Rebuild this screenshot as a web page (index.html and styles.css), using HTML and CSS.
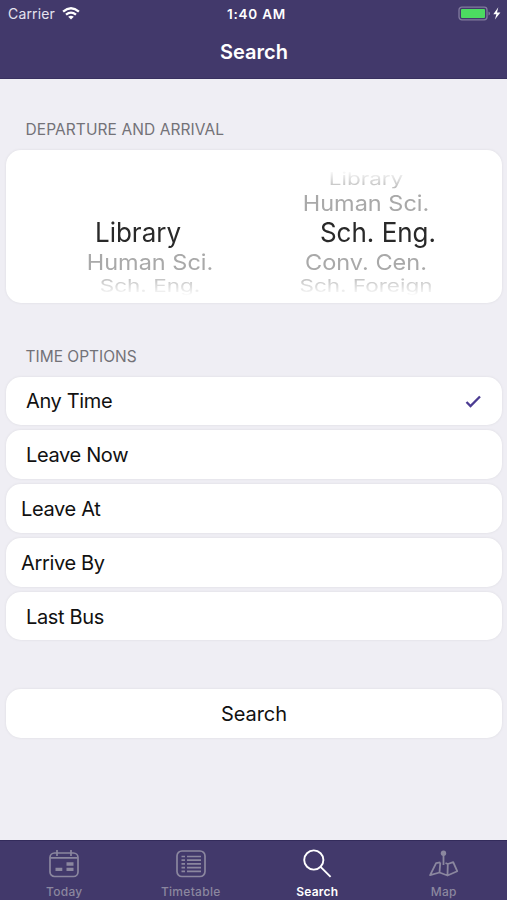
FILE: index.html
```
<!DOCTYPE html>
<html lang="en">
<head>
<meta charset="utf-8">
<title>Search</title>
<link rel="stylesheet" href="styles.css">
</head>
<body>
<header class="header">
  <div class="status">
    <div class="carrier"><span>Carrier</span>
      <svg class="wifi" viewBox="0 0 18 13" width="18" height="13" fill="none" stroke="#fff" stroke-width="2.3"><path d="M1.1 4.7Q9-2.1 16.9 4.7M4 7.7Q9 3.5 14 7.7"/><path d="M9 12.6 6.2 9.8Q9 7.5 11.8 9.8Z" fill="#fff" stroke="none"/></svg>
    </div>
    <span class="clock">1:40 AM</span>
    <svg class="battery" viewBox="0 0 44 16" width="44" height="16"><rect x="1" y="1.1" width="28" height="12.8" rx="2.8" fill="none" stroke="#817b9e" stroke-width="1.3"/><rect x="3" y="3.1" width="24" height="8.8" rx="1" fill="#4cdb61"/><path d="M30.5 5.5v4q1.5-.5 1.5-2t-1.5-2" fill="#817b9e"/><path d="M40.3 1.2 35.3 8.2h3.1L36.9 13.6l5.5-7.2h-3.4Z" fill="#fff"/></svg>
  </div>
  <h1 class="title">Search</h1>
</header>
<main class="content">
  <h2 class="label">DEPARTURE AND ARRIVAL</h2>
  <section class="card picker">
    <div class="wheel wheel-from">
      <div class="far"></div>
      <div class="near"></div>
      <div class="current"><span>Library</span></div>
      <div class="near"><span>Human Sci.</span></div>
      <div class="far below"><span>Sch. Eng.</span></div>
    </div>
    <div class="wheel wheel-to">
      <div class="far above"><span>Library</span></div>
      <div class="near"><span>Human Sci.</span></div>
      <div class="current"><span>Sch. Eng.</span></div>
      <div class="near"><span>Conv. Cen.</span></div>
      <div class="far below"><span>Sch. Foreign</span></div>
    </div>
  </section>
  <h2 class="label label-time">TIME OPTIONS</h2>
  <div class="options">
    <div class="card option"><span>Any Time</span><svg viewBox="0 0 18 14" width="18" height="14" fill="none" stroke="#4b3b92" stroke-width="2.3"><path d="m2.5 8 4 4L16 2.5"/></svg></div>
    <div class="card option"><span>Leave Now</span></div>
    <div class="card option outdent"><span>Leave At</span></div>
    <div class="card option outdent"><span>Arrive By</span></div>
    <div class="card option"><span>Last Bus</span></div>
  </div>
  <div class="card submit"><span>Search</span></div>
</main>
<nav class="tabs">
  <div class="tab"><svg viewBox="0 0 32 30" width="32" height="30" fill="none" stroke="currentColor" stroke-width="1.7"><rect x="2" y="4" width="28" height="23.5" rx="4.5"/><path d="M2.5 8.8h27M9 1v6M23 1v6"/><path d="M18.5 15h7M7.5 20.4h6.8M18.5 20.4h7" stroke-width="3.4"/></svg><span>Today</span></div>
  <div class="tab"><svg viewBox="0 0 32 30" width="32" height="30" fill="none" stroke="currentColor" stroke-width="1.7"><rect x="2" y="2" width="28" height="25.5" rx="5"/><path d="M6.5 7.5H10M12 7.5h14M6.5 11.2H10M12 11.2h14M6.5 14.9H10M12 14.9h14M6.5 18.6H10M12 18.6h14M6.5 22.3H10M12 22.3h14"/></svg><span>Timetable</span></div>
  <div class="tab active"><svg viewBox="0 0 32 30" width="32" height="30" fill="none" stroke="currentColor" stroke-width="1.9"><circle cx="12.8" cy="11" r="9.6"/><path d="m19.6 17.9 10 10"/></svg><span>Search</span></div>
  <div class="tab"><svg viewBox="0 0 32 30" width="32" height="30" fill="none" stroke="currentColor" stroke-width="1.8" stroke-linejoin="round"><circle cx="15.5" cy="4.2" r="2.7" fill="currentColor" stroke="none"/><path d="M15.5 5v11M12.3 13.4 8.1 14.1 2.1 26.2 11.5 23.5 19.5 26.5 29.2 22.2 25.2 13.2 19.8 15 17.5 14M12.3 13.4 11.5 23.5M19.8 15 19.5 26.5"/></svg><span>Map</span></div>
</nav>
</body>
</html>
```
FILE: styles.css
```
* { box-sizing: border-box; }
body {
  margin: 0;
  width: 507px;
  height: 900px;
  display: flex;
  flex-direction: column;
  overflow: hidden;
  background: #efeef4;
  color: #111;
  font-family: Inter, "Liberation Sans", sans-serif;
}
h1, h2 { margin: 0; }
span { white-space: nowrap; }
svg { display: block; flex: none; }
.header {
  height: 79px;
  background: #42396b;
  color: #fff;
  border-bottom: 1px solid #38305f;
}
.status {
  height: 27px;
  display: grid;
  grid-template-columns: 1fr auto 1fr;
  align-items: center;
  padding: 0 5px 0 8px;
  font-size: 14px;
}
.carrier { display: flex; align-items: center; gap: 7px; color: #e5e3ef; letter-spacing: .15px; }
.clock { font-size: 13.5px; font-weight: 600; letter-spacing: .75px; padding-left: 3px; }
.battery { justify-self: end; }
.title {
  text-align: center;
  font-size: 20px;
  line-height: 24px;
  font-weight: 600;
  letter-spacing: 0;
  padding: 13px 0 0 1px;
}
.content { flex: 1; padding: 0 5px 0 6px; }
.label {
  height: 70.5px;
  padding: 40.5px 0 0 19.5px;
  font-size: 15.5px;
  line-height: 20px;
  font-weight: 400;
  letter-spacing: .08px;
  color: #737278;
}
.label-time { height: 74px; padding-top: 44px; letter-spacing: 0; }
.card {
  background: #fff;
  border-radius: 15px;
  box-shadow: 0 0 3px rgba(0, 0, 0, .08);
}
.picker {
  height: 153px;
  display: grid;
  grid-template-columns: 216px 216px;
  padding: 18px 28px 0 36px;
}
.wheel {
  display: grid;
  grid-template-rows: 23px 25px 34px 25px 23px;
  text-align: center;
}
.wheel div { display: flex; align-items: center; justify-content: center; }
.wheel span { display: block; }
.current { color: #292929; font-size: 26px; }
.current span { transform: scaleY(1.04); }
.wheel-from .current { padding-right: 24px; }
.wheel-to .current { padding-left: 24px; }
.near { color: #a9a9a9; font-size: 23.5px; }
.near span { transform: scaleY(.93); }
.far { color: #bdbdbd; font-size: 22.5px; overflow: hidden; }
.far span { transform: translateY(-.5px) scaleY(.74); }
.above { -webkit-mask-image: linear-gradient(transparent 2px, #000 20px); mask-image: linear-gradient(transparent 2px, #000 20px); }
.below { -webkit-mask-image: linear-gradient(#000 2px, transparent 21px); mask-image: linear-gradient(#000 2px, transparent 21px); }
.options { display: grid; gap: 5px; }
.option {
  height: 48.8px;
  display: flex;
  align-items: center;
  justify-content: space-between;
  padding: 1px 20px 0;
  font-size: 20px;
  letter-spacing: -.35px;
}
.outdent { padding-left: 15px; }
.submit {
  height: 49px;
  margin-top: 48.5px;
  display: flex;
  align-items: center;
  justify-content: center;
  padding-top: 1px;
  font-size: 20px;
  letter-spacing: -.1px;
}
.tabs {
  height: 60px;
  display: grid;
  grid-template-columns: repeat(4, 1fr);
  background: #42396b;
  border-top: 1px solid #332b5b;
  padding: 8px 0 0 1px;
  color: #8b879f;
}
.tab { display: flex; flex-direction: column; align-items: center; }
.tab span { font-size: 12px; line-height: 15px; font-weight: 500; letter-spacing: .3px; margin-top: 5px; }
.tab.active { color: #fff; }
.active span { font-weight: 600; letter-spacing: .2px; }
```
